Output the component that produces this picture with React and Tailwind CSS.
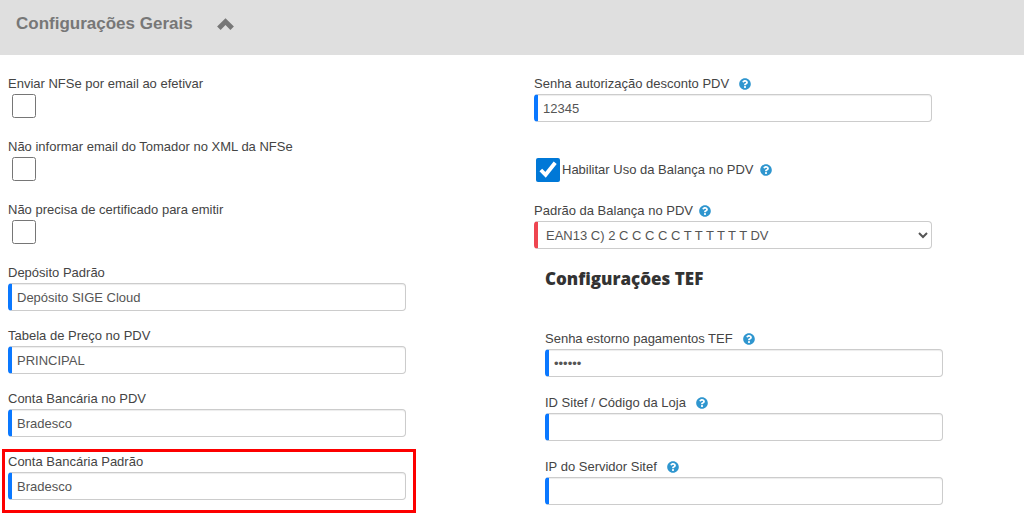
import { FaQuestionCircle } from 'react-icons/fa';

const inputClass =
  'block w-full h-7 rounded border border-[#ccc] border-l-[#0a78ff] border-l-4 bg-white pl-[5px] pr-2 text-[13px] text-[#555] shadow-[inset_0_1px_1px_rgba(0,0,0,0.075)] outline-none';

function Help({ text, className = 'ml-2.5' }) {
  return (
    <button type="button" aria-label={text} title={text} className={`${className} text-[#2f96cf]`}>
      <FaQuestionCircle className="size-3" />
    </button>
  );
}

function CheckField({ id, label }) {
  return (
    <div className="h-12">
      <label htmlFor={id} className="block h-5 leading-5">
        {label}
      </label>
      <input id={id} type="checkbox" className="block size-6 ml-1 accent-[#0078d7]" />
    </div>
  );
}

function TextField({ id, label, help, type = 'text', value = '' }) {
  return (
    <div>
      <div className="flex items-center h-5">
        <label htmlFor={id} className="leading-5">
          {label}
        </label>
        {help && <Help text={help} />}
      </div>
      <input id={id} type={type} defaultValue={value} className={inputClass} />
    </div>
  );
}

export default function App() {
  return (
    <main className="bg-white text-[13px] text-[#444] font-['Liberation_Sans',Arial,sans-serif]">
      <header className="flex items-center gap-6 h-[55px] bg-[#dfdfdf] px-4 pb-[7px] text-[#777]">
        <h1 className="text-[17px] font-bold">Configurações Gerais</h1>
        <button type="button" aria-label="Recolher">
          <svg viewBox="0 0 17 12" className="w-[17px] h-3" fill="currentColor">
            <path d="M8.5 0.2 16.9 8.4 13.4 11.9 8.5 7.1 3.6 11.9 0.1 8.4Z" />
          </svg>
        </button>
      </header>

      <form className="grid grid-cols-2 gap-32 pt-[19px] pb-3 pl-2 pr-[92px]">
        <div className="flex flex-col gap-[15px]">
          <CheckField id="nfse-email" label="Enviar NFSe por email ao efetivar" />
          <CheckField id="nfse-tomador" label="Não informar email do Tomador no XML da NFSe" />
          <CheckField id="certificado" label="Não precisa de certificado para emitir" />
          <TextField id="deposito" label="Depósito Padrão" value="Depósito SIGE Cloud" />
          <TextField id="tabela" label="Tabela de Preço no PDV" value="PRINCIPAL" />
          <TextField id="conta-pdv" label="Conta Bancária no PDV" value="Bradesco" />
          <div className="relative">
            <TextField id="conta-padrao" label="Conta Bancária Padrão" value="Bradesco" />
            <div className="absolute -left-1.5 -right-2.5 -top-[3px] -bottom-[13px] border-[3px] border-[#fd0000] pointer-events-none" />
          </div>
        </div>

        <div>
          <TextField
            id="senha-desconto"
            label="Senha autorização desconto PDV"
            help="Senha para autorizar desconto"
            value="12345"
          />

          <div className="flex items-center h-6 mt-9">
            <input id="balanca" type="checkbox" defaultChecked className="size-6 ml-0.5 mr-0.5 accent-[#0078d7]" />
            <label htmlFor="balanca">Habilitar Uso da Balança no PDV</label>
            <Help text="Uso da balança" className="ml-1.5" />
          </div>

          <div className="mt-[19px]">
            <div className="flex items-center h-5">
              <label htmlFor="padrao-balanca">Padrão da Balança no PDV</label>
              <Help text="Padrão da balança" className="ml-1.5" />
            </div>
            <select
              id="padrao-balanca"
              className="block w-full h-7 rounded border border-[#ccc] border-l-[#ee4550] border-l-4 bg-white pl-1 text-[13px] text-[#555] outline-none"
            >
              <option>EAN13 C) 2 C C C C C T T T T T T DV</option>
            </select>
          </div>

          <section className="ml-[11px] -mr-[11px] mt-[18px]">
            <h2 className="h-6 leading-6 text-[17px] font-extrabold text-[#333] font-['Open_Sans',sans-serif]">
              Configurações TEF
            </h2>
            <div className="flex flex-col gap-4 mt-[38px]">
              <TextField
                id="senha-tef"
                label="Senha estorno pagamentos TEF"
                help="Senha para estorno"
                type="password"
                value="123456"
              />
              <TextField id="sitef" label="ID Sitef / Código da Loja" help="Código da loja no Sitef" />
              <TextField id="ip-sitef" label="IP do Servidor Sitef" help="Endereço do servidor Sitef" />
            </div>
          </section>
        </div>
      </form>
    </main>
  );
}
